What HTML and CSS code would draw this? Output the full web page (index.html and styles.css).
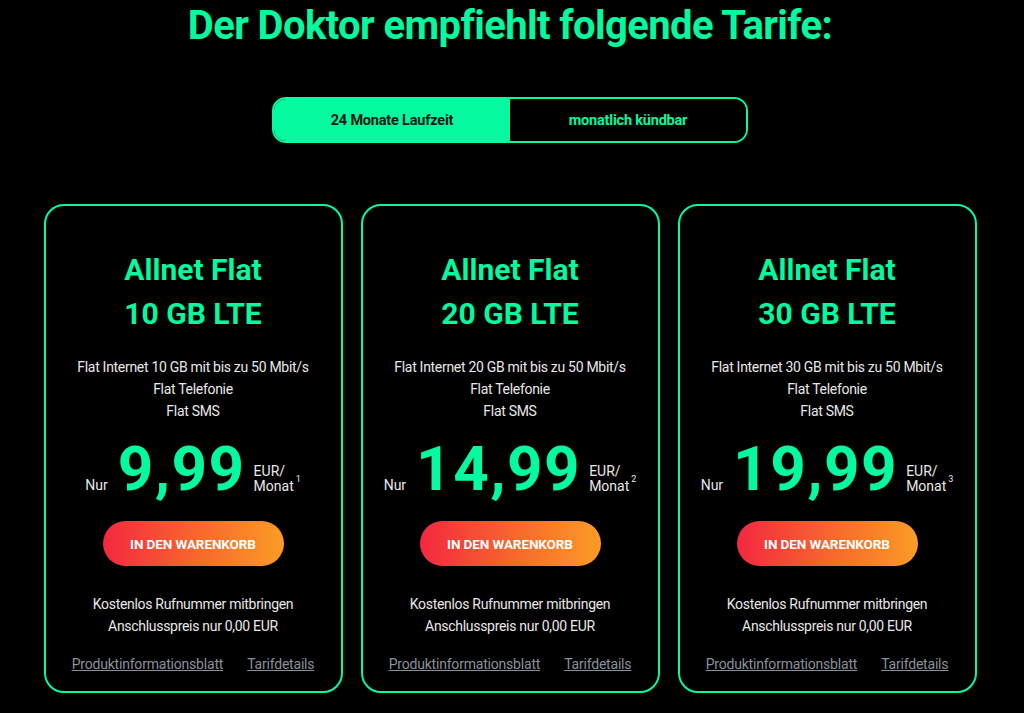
FILE: index.html
```html
<!DOCTYPE html>
<html lang="de">
<head>
<meta charset="utf-8">
<title>Tarife</title>
<link rel="stylesheet" href="styles.css">
</head>
<body>
<main class="page">
  <h1 class="title">Der Doktor empfiehlt folgende Tarife:</h1>
  <div class="toggle">
    <button class="toggle-btn active">24 Monate Laufzeit</button>
    <button class="toggle-btn">monatlich kündbar</button>
  </div>
  <section class="cards">
    <article class="card">
      <h2 class="card-title">Allnet Flat<br>10 GB LTE</h2>
      <ul class="features">
        <li>Flat Internet 10 GB mit bis zu 50 Mbit/s</li>
        <li>Flat Telefonie</li>
        <li>Flat SMS</li>
      </ul>
      <div class="price">
        <span class="nur">Nur</span>
        <span class="amount">9,99</span>
        <span class="unit">EUR/<br>Monat</span>
        <sup class="fn">1</sup>
      </div>
      <button class="cart">IN DEN WARENKORB</button>
      <ul class="extras">
        <li>Kostenlos Rufnummer mitbringen</li>
        <li>Anschlusspreis nur 0,00 EUR</li>
      </ul>
      <div class="links"><a href="#">Produktinformationsblatt</a><a href="#">Tarifdetails</a></div>
    </article>
    <article class="card">
      <h2 class="card-title">Allnet Flat<br>20 GB LTE</h2>
      <ul class="features">
        <li>Flat Internet 20 GB mit bis zu 50 Mbit/s</li>
        <li>Flat Telefonie</li>
        <li>Flat SMS</li>
      </ul>
      <div class="price">
        <span class="nur">Nur</span>
        <span class="amount">14,99</span>
        <span class="unit">EUR/<br>Monat</span>
        <sup class="fn">2</sup>
      </div>
      <button class="cart">IN DEN WARENKORB</button>
      <ul class="extras">
        <li>Kostenlos Rufnummer mitbringen</li>
        <li>Anschlusspreis nur 0,00 EUR</li>
      </ul>
      <div class="links"><a href="#">Produktinformationsblatt</a><a href="#">Tarifdetails</a></div>
    </article>
    <article class="card">
      <h2 class="card-title">Allnet Flat<br>30 GB LTE</h2>
      <ul class="features">
        <li>Flat Internet 30 GB mit bis zu 50 Mbit/s</li>
        <li>Flat Telefonie</li>
        <li>Flat SMS</li>
      </ul>
      <div class="price">
        <span class="nur">Nur</span>
        <span class="amount">19,99</span>
        <span class="unit">EUR/<br>Monat</span>
        <sup class="fn">3</sup>
      </div>
      <button class="cart">IN DEN WARENKORB</button>
      <ul class="extras">
        <li>Kostenlos Rufnummer mitbringen</li>
        <li>Anschlusspreis nur 0,00 EUR</li>
      </ul>
      <div class="links"><a href="#">Produktinformationsblatt</a><a href="#">Tarifdetails</a></div>
    </article>
  </section>
</main>
</body>
</html>
```
FILE: styles.css
```css
* { box-sizing: border-box; }
html, body { margin: 0; padding: 0; background: #000; }
body {
  font-family: Roboto, "Liberation Sans", sans-serif;
  color: #e8e8e8;
  overflow: hidden;
}
.page {
  width: 1020px;
  height: 713px;
  display: flex;
  flex-direction: column;
  align-items: center;
}
.title {
  margin: 4px 0 0;
  font-size: 40px;
  line-height: 44px;
  font-weight: 700;
  letter-spacing: -0.6px;
  color: #05f99f;
}
.toggle {
  margin-top: 49px;
  width: 476px;
  height: 46px;
  display: flex;
  border: 2px solid #05f99f;
  border-radius: 14px;
  overflow: hidden;
}
.toggle-btn {
  flex: 1;
  border: 0;
  background: #000;
  color: #05f99f;
  font-family: inherit;
  font-size: 14.5px;
  font-weight: 700;
  letter-spacing: -0.2px;
}
.toggle-btn.active {
  background: #05f99f;
  color: #0a1a14;
}
.cards {
  margin-top: 61px;
  display: flex;
  gap: 18px;
}
.card {
  width: 299px;
  height: 489px;
  border: 2px solid #05f99f;
  border-radius: 20px;
  display: flex;
  flex-direction: column;
  align-items: center;
  text-align: center;
  padding-top: 42px;
}
.card-title {
  margin: 0;
  font-size: 30px;
  line-height: 44px;
  font-weight: 700;
  color: #05f99f;
  letter-spacing: 0;
}
.features, .extras {
  list-style: none;
  margin: 0;
  padding: 0;
  font-size: 14px;
  line-height: 22px;
  letter-spacing: -0.3px;
}
.features { margin-top: 20px; }
.price {
  margin-top: 16px;
  display: flex;
  align-items: flex-end;
  height: 62px;
}
.nur {
  font-size: 14px;
  line-height: 16px;
  margin-right: 10px;
  margin-bottom: 7px;
}
.amount {
  font-size: 62px;
  line-height: 62px;
  font-weight: 700;
  color: #05f99f;
  letter-spacing: 1.5px;
}
.unit {
  font-size: 14px;
  line-height: 15px;
  text-align: left;
  margin-left: 8px;
  margin-bottom: 6px;
}
.fn {
  font-size: 9px;
  align-self: flex-end;
  margin-left: 2px;
  margin-bottom: 16px;
  line-height: 10px;
}
.cart {
  margin-top: 21px;
  width: 181px;
  height: 45px;
  border: 0;
  border-radius: 23px;
  background: linear-gradient(90deg, #f4283f 0%, #f86a2d 55%, #fb9c26 100%);
  color: #fff;
  font-family: inherit;
  font-size: 13.5px;
  font-weight: 700;
  letter-spacing: -0.1px;
}
.extras { margin-top: 27px; }
.links {
  margin-top: 19px;
  display: flex;
  gap: 24px;
  font-size: 14px;
  letter-spacing: -0.2px;
}
.links a {
  color: #8a909c;
  text-decoration: underline;
}
```
